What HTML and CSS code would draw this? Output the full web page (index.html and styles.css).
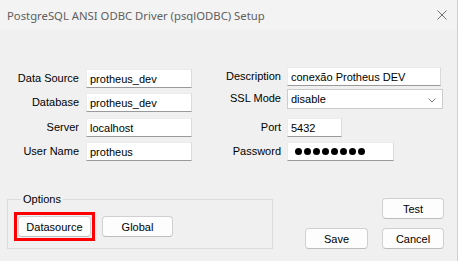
FILE: index.html
```html
<!DOCTYPE html>
<html lang="en">
<head>
    <meta charset="UTF-8">
    <title>PostgreSQL ANSI ODBC Driver (psqlODBC) Setup</title>
    <link rel="stylesheet" href="styles.css">
</head>
<body>
<div class="window">
    <div class="titlebar">
        <span class="title">PostgreSQL ANSI ODBC Driver (psqlODBC) Setup</span>
        <svg class="close" width="10" height="10" viewBox="0 0 10 10">
            <path d="M0.5 0.5 L9.5 9.5 M9.5 0.5 L0.5 9.5" stroke="#6f6f6f" stroke-width="1" fill="none"/>
        </svg>
    </div>

    <div class="fields">
        <div class="col col-left">
            <label>Data Source</label>
            <input class="field" type="text" value="protheus_dev">
            <label>Database</label>
            <input class="field" type="text" value="protheus_dev">
            <label>Server</label>
            <input class="field" type="text" value="localhost">
            <label>User Name</label>
            <input class="field" type="text" value="protheus">
        </div>

        <div class="col col-right">
            <label>Description</label>
            <input class="field w-desc" type="text" value="conexão Protheus DEV">
            <label>SSL Mode</label>
            <div class="combo">
                <span>disable</span>
                <svg width="8" height="5" viewBox="0 0 8 5">
                    <path d="M0.5 0.5 L4 4 L7.5 0.5" stroke="#7a7a7a" stroke-width="1" fill="none"/>
                </svg>
            </div>
            <label>Port</label>
            <input class="field w-port" type="text" value="5432">
            <label>Password</label>
            <div class="field w-pass password">
                <span class="dot"></span><span class="dot"></span><span class="dot"></span><span class="dot"></span>
                <span class="dot"></span><span class="dot"></span><span class="dot"></span><span class="dot"></span>
            </div>
        </div>
    </div>

    <div class="bottom">
        <fieldset class="options">
            <legend>Options</legend>
            <span class="focus-ring"><button class="btn btn-ds">Datasource</button></span>
            <button class="btn btn-global">Global</button>
        </fieldset>

        <div class="actions">
            <button class="btn btn-test">Test</button>
            <button class="btn">Save</button>
            <button class="btn">Cancel</button>
        </div>
    </div>
</div>
</body>
</html>
```

FILE: styles.css
```css
body { margin: 0; background: #f0f0f0; font-family: "Liberation Sans", Arial, sans-serif; font-size: 11px; color: #000; }
.window { width: 457px; height: 261px; border-right: 1px solid #cfcfcf; display: flex; flex-direction: column; }

/* title bar */
.titlebar { height: 30px; display: flex; align-items: center; justify-content: space-between; padding: 0 10px 0 7px; background: #f3f3f3; }
.title { font-family: "Noto Sans", "Segoe UI", sans-serif; font-size: 11.3px; color: #606060; }
.close { display: block; }

/* form fields */
.fields { display: flex; padding: 37px 0 0 7px; }
.col { display: grid; align-items: start; }
.col label { line-height: 19px; text-align: right; white-space: nowrap; }
.col-left { grid-template-columns: 72px 106px; grid-template-rows: 24px 25px 24px 19px; column-gap: 7px; margin-top: 2px; }
.col-right { grid-template-columns: 61px auto; grid-template-rows: 22px 29px 24px 19px; column-gap: 6px; margin-left: 28px; }

.field { box-sizing: border-box; height: 19px; width: 106px; margin: 0; padding: 0 3px; background: #fff; border: 1px solid #ececec; border-right-color: #dadada; border-bottom-color: #9a9a9a; font-family: "Liberation Sans", Arial, sans-serif; font-size: 11px; color: #000; outline: none; }
.w-desc { width: 154px; }
.w-port { width: 55px; }
.w-pass { width: 107px; }
.password { display: flex; align-items: center; gap: 2px; padding-left: 7px; }
.dot { width: 7px; height: 7px; border-radius: 50%; background: #000; }

.combo { box-sizing: border-box; height: 20px; width: 156px; display: flex; align-items: center; justify-content: space-between; padding: 0 6px 0 3px; background: #fff; border: 1px solid #cccccc; }
.combo svg { display: block; margin-top: 2px; }

/* bottom area */
.bottom { display: flex; justify-content: space-between; align-items: flex-end; padding: 0 13px 0 7px; margin-top: 32px; }
.options { box-sizing: border-box; width: 266px; margin: 0; padding: 6px 6px 7px; border: 1px solid #dcdcdc; display: flex; align-items: center; gap: 7px; min-width: 0; }
.options legend { padding: 0 2px; margin-left: 7px; line-height: 13px; }

.btn { box-sizing: border-box; height: 21px; padding: 0; background: #fdfdfd; border: 1px solid #d0d0d0; border-bottom-color: #bdbdbd; border-radius: 4px; font-family: "Liberation Sans", Arial, sans-serif; font-size: 11px; color: #000; }
.btn-ds { width: 73px; display: block; }
.btn-global { width: 71px; }
.focus-ring { display: block; border: 3px solid #ff0000; padding: 1px; }

.actions { display: grid; grid-template-columns: 63px 62px; column-gap: 14px; row-gap: 9px; }
.btn-test { grid-column: 2; }
```
